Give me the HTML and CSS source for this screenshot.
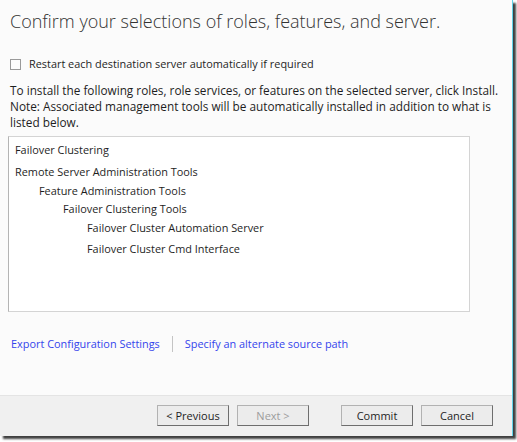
FILE: index.html
```html
<!DOCTYPE html>
<html>
<head>
<meta charset="utf-8">
<link rel="stylesheet" href="styles.css">
</head>
<body>
<div class="window">
  <div class="content">
    <h1 class="title">Confirm your selections of roles, features, and server.</h1>
    <label class="check-row"><span class="checkbox"></span><span>Restart each destination server automatically if required</span></label>
    <p class="note">To install the following roles, role services, or features on the selected server, click Install.<br>Note: Associated management tools will be automatically installed in addition to what is<br>listed below.</p>
    <div class="listbox">
      <div class="item i1">Failover Clustering</div>
      <div class="item i2">Remote Server Administration Tools</div>
      <div class="item i3 lvl1">Feature Administration Tools</div>
      <div class="item i4 lvl2">Failover Clustering Tools</div>
      <div class="item i5 lvl3">Failover Cluster Automation Server</div>
      <div class="item i6 lvl3">Failover Cluster Cmd Interface</div>
    </div>
    <div class="links">
      <a class="link">Export Configuration Settings</a>
      <span class="sep"></span>
      <a class="link">Specify an alternate source path</a>
    </div>
  </div>
  <div class="footer">
    <button class="btn">&lt; Previous</button>
    <button class="btn disabled">Next &gt;</button>
    <button class="btn commit">Commit</button>
    <button class="btn">Cancel</button>
  </div>
</div>
</body>
</html>
```
FILE: styles.css
```css
html, body {
  margin: 0;
  padding: 0;
  background: #ffffff;
}
body {
  width: 517px;
  height: 442px;
  overflow: hidden;
  font-family: "Open Sans", "Noto Sans", sans-serif;
  font-size: 10.9px;
  color: #1e1e1e;
}
.window {
  width: 512px;
  height: 436px;
  border-right: 1px solid #62d4ea;
  display: flex;
  flex-direction: column;
  box-shadow: 3px 3px 2px rgba(0, 0, 0, 0.75);
  background: #fbfbfb;
}
.content {
  flex: 1;
  padding: 9px 0 0 0;
}
.title {
  margin: 0 0 0 10px;
  font-size: 18px;
  line-height: 24px;
  font-weight: 300;
  color: #333333;
  white-space: nowrap;
}
.check-row {
  display: flex;
  align-items: center;
  margin: 23px 0 0 10px;
  line-height: 16px;
  font-size: 10.9px;
}
.checkbox {
  width: 9px;
  height: 9px;
  border: 1px solid #9a9a9a;
  background: #fdfdfd;
  margin-right: 8px;
}
.note {
  margin: 10px 0 0 10px;
  line-height: 16px;
  font-size: 11.8px;
  white-space: nowrap;
}
.listbox {
  margin: 6px 0 0 8px;
  width: 454px;
  height: 174px;
  border: 1px solid #d4d4d4;
  border-left-color: #b4b4b4;
  background: #ffffff;
  padding-left: 6px;
  box-sizing: content-box;
}
.item {
  line-height: 16px;
  white-space: nowrap;
}
.i1 { margin-top: 5px; }
.i2 { margin-top: 6px; }
.i3 { margin-top: 3px; }
.i4 { margin-top: 2px; }
.i5 { margin-top: 3px; }
.i6 { margin-top: 5px; }
.lvl1 { padding-left: 24px; }
.lvl2 { padding-left: 48px; }
.lvl3 { padding-left: 72px; }
.links {
  display: flex;
  align-items: center;
  margin: 24px 0 0 11px;
  line-height: 16px;
}
.link {
  color: #3444ec;
  cursor: pointer;
}
.sep {
  width: 1px;
  height: 16px;
  background: #c4c4c4;
  margin: 0 12px;
}
.footer {
  height: 41px;
  border-top: 1px solid #e4e4e4;
  background: #f0f0f0;
  display: flex;
  justify-content: flex-end;
  align-items: flex-start;
  padding: 9px 19px 0 0;
  box-sizing: border-box;
}
.btn {
  width: 72px;
  height: 21px;
  margin-left: 8px;
  padding: 0;
  font-family: "Open Sans", "Noto Sans", sans-serif;
  font-size: 11px;
  color: #1e1e1e;
  background: #ececec;
  border: 1px solid #b2b2b2;
  border-right-color: #6e6e6e;
  border-bottom-color: #6e6e6e;
  border-radius: 0;
}
.btn.disabled {
  color: #9c9c9c;
}
.btn.commit {
  margin-left: 32px;
}
```
